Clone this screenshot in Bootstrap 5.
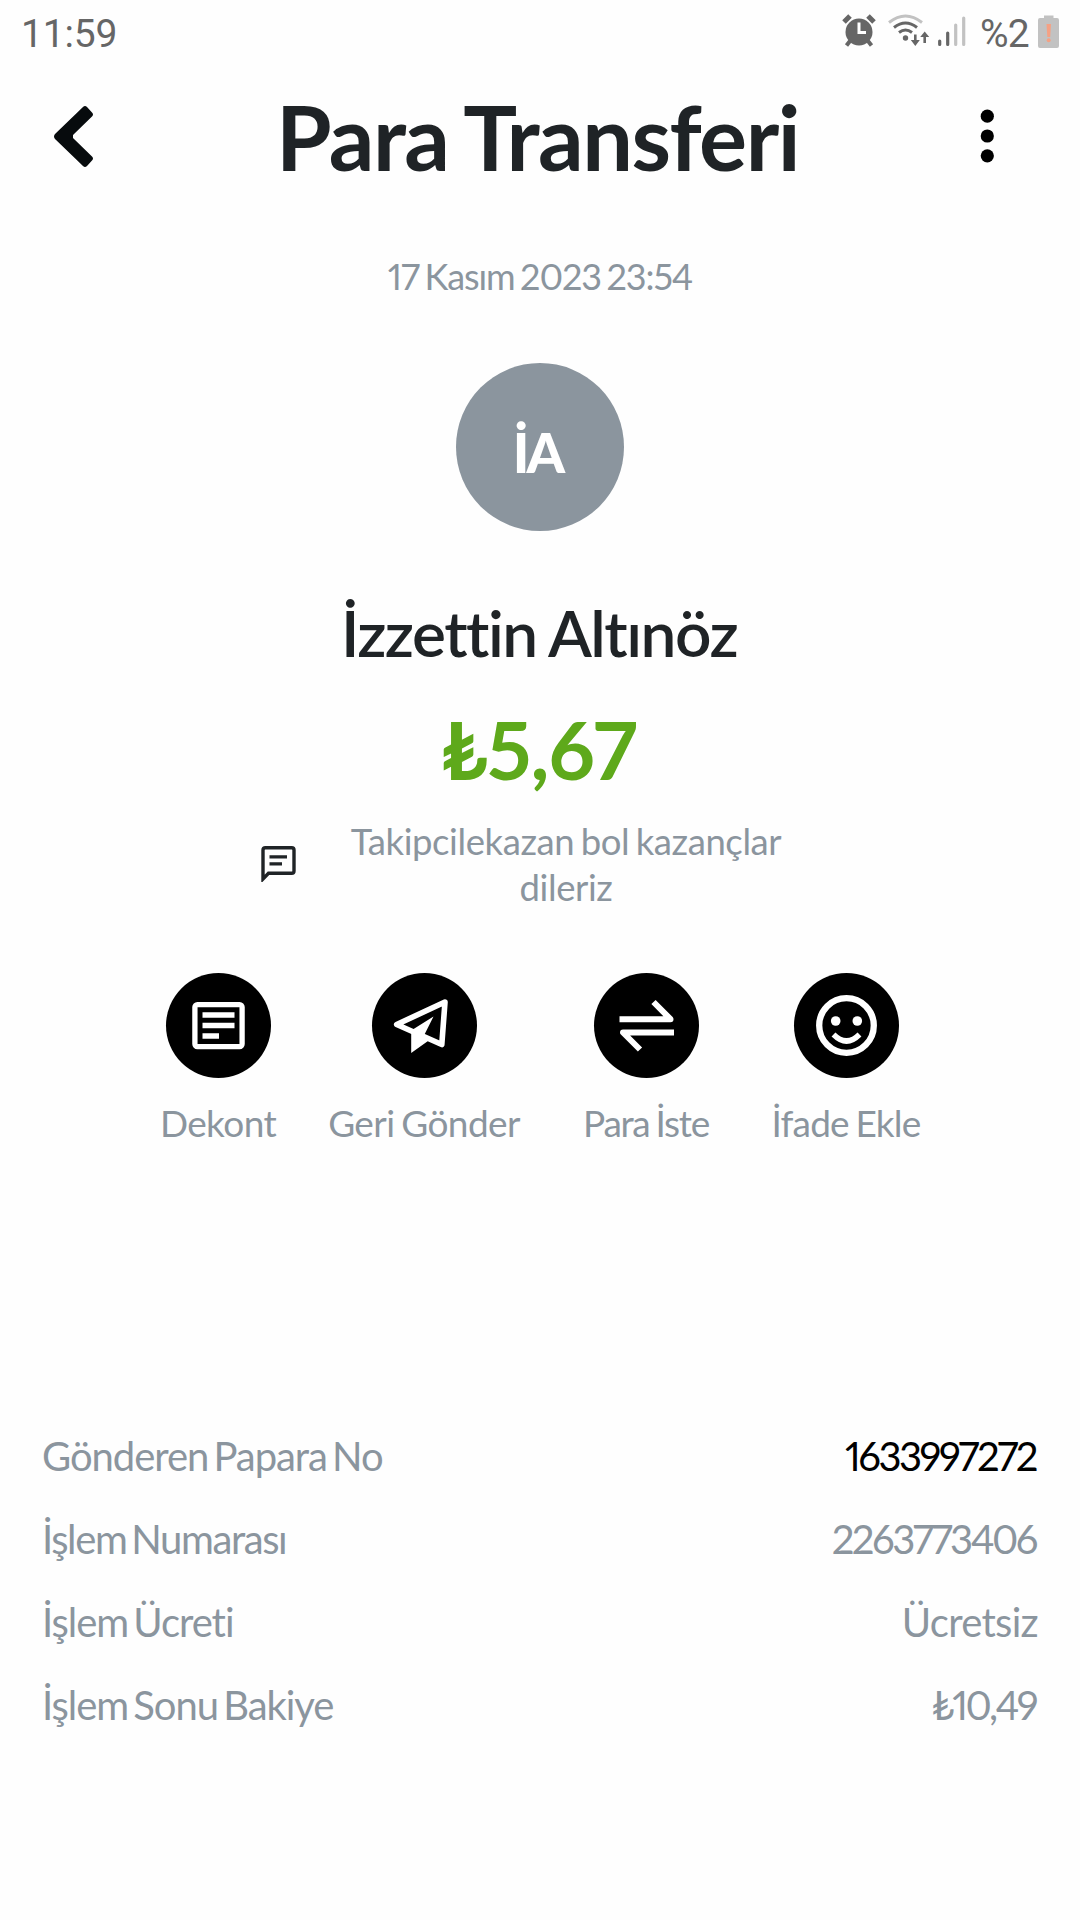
<!DOCTYPE html>
<html lang="tr">
<head>
<meta charset="utf-8">
<meta name="viewport" content="width=device-width, initial-scale=1">
<title>Para Transferi</title>
<link href="https://cdn.jsdelivr.net/npm/bootstrap@5.3.0/dist/css/bootstrap.min.css" rel="stylesheet">
<style>
body{font-family:Lato,"Open Sans",sans-serif;color:#1f2326;background:#fefefe;width:1080px;height:1920px;overflow:hidden;font-variant-numeric:proportional-nums}
svg{display:block;flex:none}
.soft{color:#8b959e}
.statusbar{height:67px;padding:0 21px 0 21px;font:39px/69px Roboto,sans-serif;color:#666}
.clock{letter-spacing:-.2px}
.charge{letter-spacing:-.8px}
.topbar{height:138px;padding:0 84px 0 52px}
.title{font-size:90px;line-height:136px;font-weight:700;letter-spacing:-1.5px;word-spacing:-3px;padding-left:2px}
.date{font-size:36px;line-height:54px;margin-top:44px;letter-spacing:-1.1px;word-spacing:-2.5px}
.avatar{width:168px;height:168px;margin-top:60px;padding:10px 5px 0 0;background:#8b959e;color:#fff;font-size:55px;font-weight:900;letter-spacing:-3px}
.person{font-size:64px;line-height:80px;margin-top:62px;font-weight:600;letter-spacing:-1.5px;word-spacing:-1px;padding-right:2px}
.amount{font-size:81px;line-height:96px;margin-top:28px;font-weight:700;color:#5ea91b;letter-spacing:-1px;padding-right:3px}
.note{margin:21px 0 0 261px;gap:39px}
.note-text{width:462px;font-size:36.5px;line-height:46px;letter-spacing:-.4px;word-spacing:-2.5px}
.actions{margin:63px 0 0 161px}
.action{font-size:37px;line-height:46px;letter-spacing:-.6px;word-spacing:-2px;white-space:nowrap}
.disc{width:105px;height:105px;background:#000;margin-bottom:22px}
.a1{width:114px}.a2{width:192px;margin-left:53px}.a3{width:124px;margin-left:64px;letter-spacing:-1.3px}.a4{width:146px;margin-left:65px;letter-spacing:-.8px}
.details{margin-top:268px;padding:0 42px 0 42px;font-size:40px}
.line{height:83px;letter-spacing:-1.05px;word-spacing:-4px}
.tight{letter-spacing:-1.4px}
.loose{letter-spacing:-.7px}
.digits{letter-spacing:-2.5px;padding-right:2px}
</style>
<script src="https://cdn.jsdelivr.net/npm/bootstrap@5.3.0/dist/js/bootstrap.bundle.min.js"></script>
</head>
<body>
<div class="statusbar d-flex justify-content-between">
  <span class="clock">11:59</span>
  <div class="d-flex">
    <svg width="138" height="67" viewBox="842 0 138 67">
      <g stroke="#666" stroke-width="4" fill="none"><path d="M844 22l6-6M868 16l6 6" stroke-width="5"/><path d="M850 41l-3.500 4.500M868 41l3.500 4.500"/></g>
      <circle cx="859" cy="32" r="13.500" fill="#666"/><path d="M859 22.500V32.500h7" stroke="#fff" stroke-width="3" fill="none"/>
      <path d="M889 22.500Q905.500 9.500 922 22.500" stroke="#c2c2c2" stroke-width="3" fill="none"/>
      <path d="M894 27.500Q905.500 18.500 917 27.500M899 32.500Q905.500 27.500 912 32.500" stroke="#666" stroke-width="3" fill="none"/>
      <circle cx="905.500" cy="38" r="2.700" fill="#666"/>
      <path d="M915.300 34.500V43M924.700 43V35" stroke="#666" stroke-width="2.600"/><path d="M910.800 40h9L915.300 46zM920.200 37h9L924.700 31.500z" fill="#666"/>
      <g stroke-width="3.200" stroke-linecap="round"><path d="M939.700 41V44.500M947.700 33V44.500" stroke="#666"/><path d="M955.700 25V44.500M963.700 18V44.500" stroke="#c2c2c2"/></g>
    </svg>
    <span class="charge">%2</span>
    <svg width="22" height="67" viewBox="1037 0 22 67" class="ms-2"><path d="M1044 18v-2.500h9.500V18h3.500q2 0 2 2v26q0 2-2 2h-17q-2 0-2-2V20q0-2 2-2z" fill="#c2c2c2"/><path d="M1046.500 24h4.500l-.8 13h-2.900z" fill="#f5a184"/><circle cx="1048.700" cy="40.300" r="2" fill="#f5a184"/></svg>
  </div>
</div>
<header class="topbar d-flex align-items-center justify-content-between">
  <svg width="43" height="64" viewBox="52 104 43 64"><path d="M83 107q2-2 4 0l5 5.500q2 2 0 4L73 135v3l19 18.500q2 2 0 4l-5 5.500q-2 2-4 0L55 139q-2-2.500 0-5z" fill="#070b0d"/></svg>
  <h1 class="title m-0">Para Transferi</h1>
  <svg width="18" height="60" viewBox="978 106.500 18 60"><circle cx="987.300" cy="116.700" r="6.600"/><circle cx="987.300" cy="136.500" r="6.600"/><circle cx="987.300" cy="156.300" r="6.600"/></svg>
</header>
<main>
  <section class="d-flex flex-column align-items-center">
    <div class="date soft">17 Kasım 2023 23:54</div>
    <div class="avatar rounded-circle d-flex align-items-center justify-content-center">İA</div>
    <h2 class="person mb-0">İzzettin Altınöz</h2>
    <div class="amount">₺5,67</div>
  </section>
  <div class="note d-flex align-items-center">
    <svg width="35" height="36" viewBox="0 0 35 36"><path d="M2 33V4q0-2.300 2.300-2.300h26.400Q33 1.700 33 4v21q0 2.300-2.300 2.300H7.500z" fill="none" stroke="#1f2326" stroke-width="3.400"/><path d="M8.500 10.800h17.500M8.500 17.800h12.500" stroke="#1f2326" stroke-width="3.200"/></svg>
    <div class="note-text soft text-center">Takipcilekazan bol kazançlar dileriz</div>
  </div>
  <nav class="actions d-flex">
    <div class="action soft a1 d-flex flex-column align-items-center">
      <div class="disc rounded-circle"><svg width="105" height="105"><rect x="28.900" y="31.600" width="47.200" height="42" rx="2.500" fill="none" stroke="#fff" stroke-width="5.300"/><path d="M36.500 42h32M36.500 52.500h32M36.500 63h16.500" stroke="#fff" stroke-width="5.300"/></svg></div>Dekont</div>
    <div class="action soft a2 d-flex flex-column align-items-center">
      <div class="disc rounded-circle"><svg width="105" height="105"><path d="M73 29L24.700 51.500 69.800 71.500z" fill="none" stroke="#fff" stroke-width="5.600" stroke-linejoin="round"/><path d="M61.500 43.500L52.500 61.500 56 68 39.200 80V57.500z" fill="#fff"/></svg></div>Geri Gönder</div>
    <div class="action soft a3 d-flex flex-column align-items-center">
      <div class="disc rounded-circle"><svg width="105" height="105" fill="none" stroke="#fff" stroke-width="6" stroke-linejoin="round"><path d="M25.500 46.200H76.500L59.500 29M80 59.500H29L46 76.500"/></svg></div>Para İste</div>
    <div class="action soft a4 d-flex flex-column align-items-center">
      <div class="disc rounded-circle"><svg width="105" height="105"><circle cx="52.500" cy="52.500" r="27.300" fill="none" stroke="#fff" stroke-width="6.300"/><circle cx="41.700" cy="48" r="4.800" fill="#fff"/><circle cx="63.300" cy="48" r="4.800" fill="#fff"/><path d="M39.500 61.500Q52.500 74.500 65.500 61.500" fill="none" stroke="#fff" stroke-width="5.500"/></svg></div>İfade Ekle</div>
  </nav>
  <section class="details soft">
    <div class="line d-flex align-items-center justify-content-between"><span>Gönderen Papara No</span><span class="digits text-black">1633997272</span></div>
    <div class="line d-flex align-items-center justify-content-between"><span class="tight">İşlem Numarası</span><span class="digits">2263773406</span></div>
    <div class="line d-flex align-items-center justify-content-between"><span>İşlem Ücreti</span><span class="loose">Ücretsiz</span></div>
    <div class="line d-flex align-items-center justify-content-between"><span>İşlem Sonu Bakiye</span><span class="digits">₺10,49</span></div>
  </section>
</main>
</body>
</html>
